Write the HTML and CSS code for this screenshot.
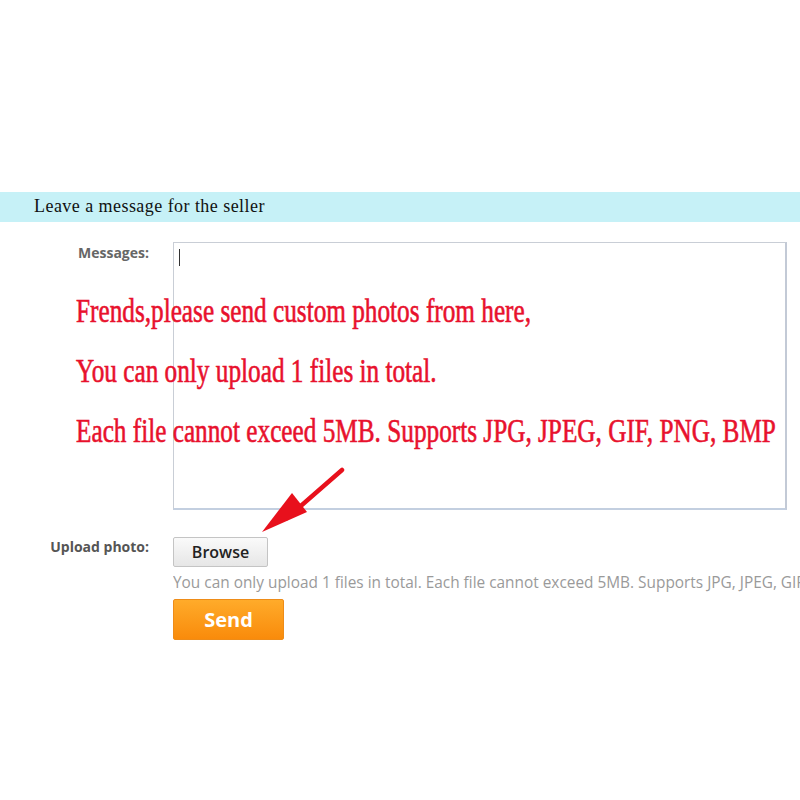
FILE: index.html
```html
<!DOCTYPE html>
<html>
<head>
<meta charset="utf-8">
<link rel="stylesheet" href="styles.css">
</head>
<body>
<div class="page">
  <div class="bar">Leave a message for the seller</div>
  <div class="form">
    <div class="row">
      <div class="label label-msg">Messages:</div>
      <div class="field">
        <div class="textarea"><span class="caret"></span></div>
      </div>
    </div>
    <div class="row row-upload">
      <div class="label label-up">Upload photo:</div>
      <div class="field">
        <div class="browse">Browse</div>
        <div class="hint">You can only upload 1 files in total. Each file cannot exceed 5MB. Supports JPG, JPEG, GIF, PNG, BMP</div>
        <div class="send">Send</div>
      </div>
    </div>
  </div>
  <div class="note">
    <div class="note-line">Frends,please send custom photos from here,</div>
    <div class="note-line">You can only upload 1 files in total.</div>
    <div class="note-line">Each file cannot exceed 5MB. Supports JPG, JPEG, GIF, PNG, BMP</div>
  </div>
  <svg class="arrow" width="120" height="100" viewBox="0 0 120 100">
    <line x1="100" y1="10" x2="45" y2="58" stroke="#e8101c" stroke-width="4.5" stroke-linecap="round"/>
    <polygon points="20,72 50,33 65,52" fill="#e8101c"/>
  </svg>
</div>
</body>
</html>
```

FILE: styles.css
```css
html, body {
  margin: 0;
  padding: 0;
  background: #ffffff;
}
body {
  width: 800px;
  height: 800px;
  overflow: hidden;
}
.page {
  position: relative;
  width: 800px;
  height: 800px;
  padding-top: 192px;
  box-sizing: border-box;
  overflow: hidden;
}
.bar {
  height: 30px;
  line-height: 29px;
  background: #c6f1f7;
  padding-left: 34px;
  font-family: "Liberation Serif", serif;
  font-size: 18px;
  letter-spacing: 0.45px;
  color: #111;
}
.form {
  padding-top: 20px;
}
.row {
  display: flex;
  gap: 24px;
}
.label {
  width: 149px;
  flex: none;
  text-align: right;
  font-family: "Open Sans", sans-serif;
  font-weight: 700;
  font-size: 14px;
  color: #666;
}
.label-msg {
  padding-top: 1px;
}
.label-up {
  padding-top: 0px;
  color: #555;
}
.field {
  flex: none;
  width: 627px;
  overflow: hidden;
}
.textarea {
  width: 614px;
  height: 268px;
  box-sizing: border-box;
  border: 1px solid #c9ced6;
  border-right: 2px solid #c3cad6;
  border-bottom: 2px solid #c3cfe0;
  background: #fff;
  padding: 6px 5px;
}
.caret {
  display: block;
  width: 1px;
  height: 17px;
  background: #333;
}
.row-upload {
  margin-top: 27px;
}
.browse {
  width: 95px;
  height: 30px;
  box-sizing: border-box;
  border: 1px solid #c4c4c4;
  border-radius: 2px;
  background: linear-gradient(#fafafa, #e6e6e6);
  font-family: "Open Sans", sans-serif;
  font-weight: 600;
  font-size: 16px;
  color: #222;
  text-align: center;
  line-height: 28px;
}
.hint {
  margin-top: 6px;
  white-space: nowrap;
  font-family: "Open Sans", sans-serif;
  font-size: 15.4px;
  color: #9a9a9a;
  line-height: 20px;
}
.send {
  margin-top: 6px;
  width: 111px;
  height: 41px;
  box-sizing: border-box;
  border: 1px solid #ee8c18;
  border-radius: 2px;
  background: linear-gradient(#ffab2a, #f98b0b);
  font-family: "Open Sans", sans-serif;
  font-weight: 700;
  font-size: 20px;
  color: #fff;
  text-align: center;
  line-height: 39px;
}
.note {
  position: absolute;
  left: 76px;
  top: 281px;
  font-family: "Liberation Serif", serif;
  font-size: 33px;
  color: #e8112d;
  line-height: 60px;
  -webkit-text-stroke: 0.6px #e8112d;
}
.note-line {
  white-space: nowrap;
  transform: scaleX(0.765);
  transform-origin: left center;
}
.arrow {
  position: absolute;
  left: 242px;
  top: 460px;
}
```
